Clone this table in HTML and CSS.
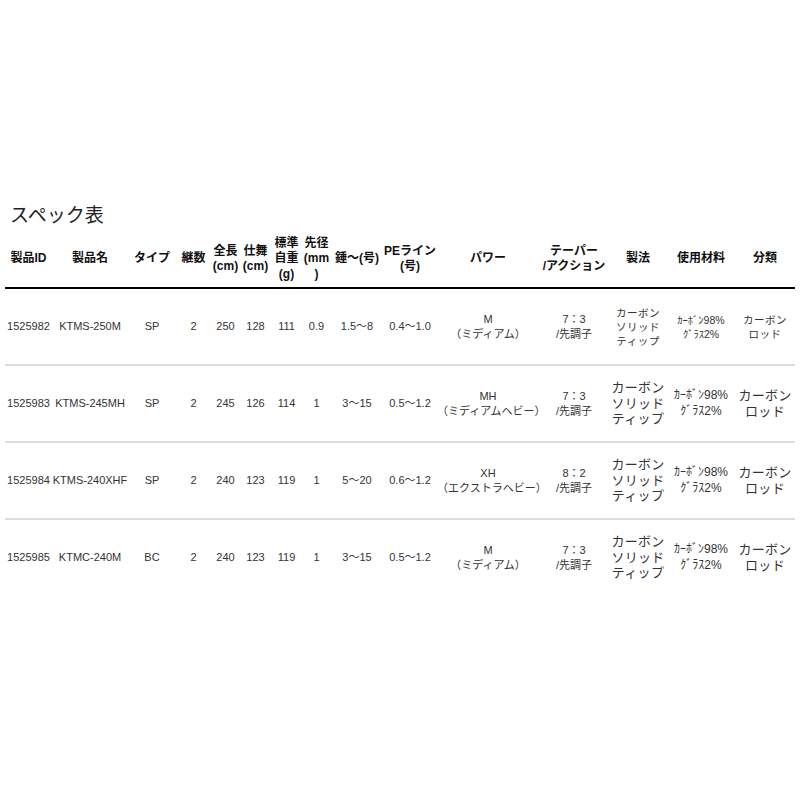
FILE: index.html
```html
<!DOCTYPE html>
<html lang="ja">
<head>
<meta charset="utf-8">
<link rel="stylesheet" href="styles.css">
</head>
<body>
<div class="page">
  <h2 class="title">スペック表</h2>
  <table class="spec">
    <colgroup>
      <col class="c47"><col class="c76"><col class="c48"><col class="c35"><col class="c29"><col class="c31"><col class="c31"><col class="c29"><col class="c52"><col class="c54"><col class="c102"><col class="c70"><col class="c58"><col class="c68"><col class="c60">
    </colgroup>
    <thead>
      <tr>
        <th>製品ID</th>
        <th>製品名</th>
        <th>タイプ</th>
        <th>継数</th>
        <th>全長<br>(cm)</th>
        <th>仕舞<br>(cm)</th>
        <th>標準<br>自重<br>(g)</th>
        <th>先径<br>(mm<br>)</th>
        <th>錘～(号)</th>
        <th>PEライン<br>(号)</th>
        <th>パワー</th>
        <th>テーパー<br>/アクション</th>
        <th>製法</th>
        <th>使用材料</th>
        <th>分類</th>
      </tr>
    </thead>
    <tbody>
      <tr class="small">
        <td>1525982</td><td>KTMS-250M</td><td>SP</td><td>2</td><td>250</td><td>128</td><td>111</td><td>0.9</td><td>1.5～8</td><td>0.4～1.0</td>
        <td>M<br>（ミディアム）</td><td>7：3<br>/先調子</td><td class="jp">カーボン<br>ソリッド<br>ティップ</td><td class="jp half">ｶｰﾎﾞﾝ98%<br>ｸﾞﾗｽ2%</td><td class="jp">カーボン<br>ロッド</td>
      </tr>
      <tr>
        <td>1525983</td><td>KTMS-245MH</td><td>SP</td><td>2</td><td>245</td><td>126</td><td>114</td><td>1</td><td>3～15</td><td>0.5～1.2</td>
        <td>MH<br>（ミディアムヘビー）</td><td>7：3<br>/先調子</td><td class="jp">カーボン<br>ソリッド<br>ティップ</td><td class="jp half">ｶｰﾎﾞﾝ98%<br>ｸﾞﾗｽ2%</td><td class="jp">カーボン<br>ロッド</td>
      </tr>
      <tr>
        <td>1525984</td><td>KTMS-240XHF</td><td>SP</td><td>2</td><td>240</td><td>123</td><td>119</td><td>1</td><td>5～20</td><td>0.6～1.2</td>
        <td>XH<br>（エクストラヘビー）</td><td>8：2<br>/先調子</td><td class="jp">カーボン<br>ソリッド<br>ティップ</td><td class="jp half">ｶｰﾎﾞﾝ98%<br>ｸﾞﾗｽ2%</td><td class="jp">カーボン<br>ロッド</td>
      </tr>
      <tr class="last">
        <td>1525985</td><td>KTMC-240M</td><td>BC</td><td>2</td><td>240</td><td>123</td><td>119</td><td>1</td><td>3～15</td><td>0.5～1.2</td>
        <td>M<br>（ミディアム）</td><td>7：3<br>/先調子</td><td class="jp">カーボン<br>ソリッド<br>ティップ</td><td class="jp half">ｶｰﾎﾞﾝ98%<br>ｸﾞﾗｽ2%</td><td class="jp">カーボン<br>ロッド</td>
      </tr>
    </tbody>
  </table>
</div>
</body>
</html>
```

FILE: styles.css
```css
html, body {
  margin: 0;
  padding: 0;
  background: #fff;
}
.page {
  padding: 204px 5px 0 5px;
  font-family: "Liberation Sans", "Noto Sans CJK JP", sans-serif;
  color: #333;
}
.title {
  margin: 0 0 3px 5px;
  font-size: 19px;
  line-height: 24px;
  font-weight: normal;
  color: #222;
}
.spec {
  width: 790px;
  table-layout: fixed;
  border-collapse: collapse;
}
.c47 { width: 47px; }
.c76 { width: 76px; }
.c48 { width: 48px; }
.c35 { width: 35px; }
.c29 { width: 29px; }
.c31 { width: 31px; }
.c52 { width: 52px; }
.c54 { width: 54px; }
.c102 { width: 102px; }
.c70 { width: 70px; }
.c58 { width: 58px; }
.c68 { width: 68px; }
.c60 { width: 60px; }
.spec th {
  height: 56px;
  padding: 0;
  font-size: 12px;
  line-height: 15.5px;
  font-weight: bold;
  color: #111;
  text-align: center;
  vertical-align: middle;
  white-space: nowrap;
  border-bottom: 2px solid #000;
}
.spec td {
  height: 75px;
  padding: 0;
  font-size: 11px;
  line-height: 15px;
  text-align: center;
  vertical-align: middle;
  white-space: nowrap;
  border-bottom: 2px solid #ddd;
}
.spec td.jp {
  font-size: 13px;
  line-height: 15.5px;
  letter-spacing: 0.3px;
}
.spec td.half {
  font-size: 12px;
  letter-spacing: 0;
}
.spec tr.small td.jp {
  font-size: 10.5px;
  line-height: 14px;
  letter-spacing: 0.5px;
}
.spec tr.small td.half {
  letter-spacing: 0;
}
.spec tr.last td {
  border-bottom: none;
}
```
